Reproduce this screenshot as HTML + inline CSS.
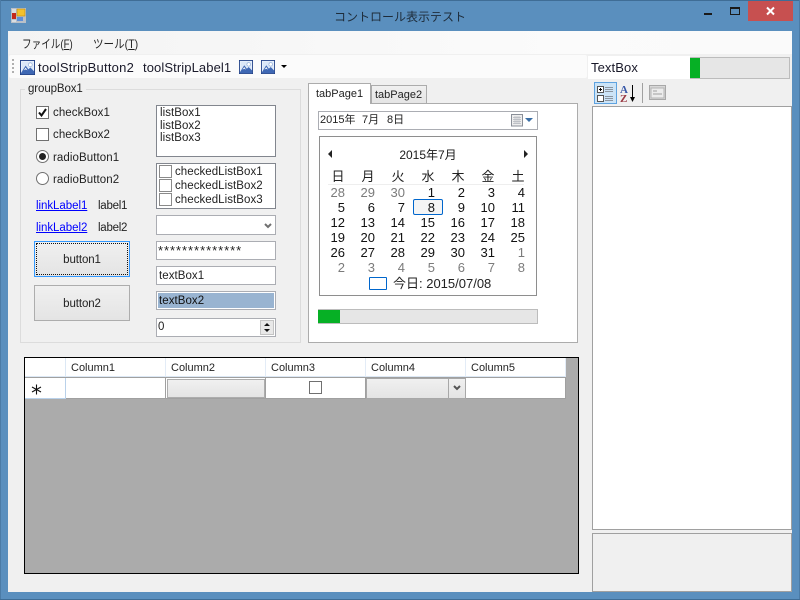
<!DOCTYPE html>
<html lang="ja"><head><meta charset="utf-8"><title>コントロール表示テスト</title>
<style>
html,body{margin:0;padding:0;width:800px;height:600px;overflow:hidden;background:#5a8fbe}
body{position:relative;font-family:"Liberation Sans","Noto Sans CJK JP",sans-serif;font-size:12px;color:#000}
div,span,svg,a{position:absolute;box-sizing:border-box}
u{position:static}
.t{white-space:nowrap;line-height:14px;letter-spacing:.08px;font-size:11.5px;color:#222}
.b{border:1px solid #abadb3;background:#fff}
.c{width:30px;text-align:right;font-size:13px;line-height:15px;color:#111;white-space:nowrap}
.m{color:#7b7b7b}
.d{width:30px;text-align:center;font-size:13px;line-height:15px;white-space:nowrap;color:#222}
.h{background:#fff;border-right:1px solid #e3ecf7;border-bottom:1px solid #dce8f5;font-size:11px;line-height:20px;padding-left:5px;color:#222;white-space:nowrap}
.r{top:378px;height:21px;background:#fff;border-right:1px solid #a0a0a0;border-bottom:1px solid #a0a0a0}
</style></head><body>
<svg width="0" height="0" style="left:0;top:0"><defs><symbol id="p" viewBox="0 0 16 16"><rect x=".5" y=".5" width="15" height="15" fill="#e8f0fa" stroke="#1f3f86"/><rect x="2" y="2" width="12" height="12" fill="#dbe7f7"/><circle cx="11" cy="5" r="2" fill="#fff" stroke="#7f9fd0" stroke-width=".6"/><path d="M1 14 L6 6 L9 10 L11 8 L15 12 V15 H1Z" fill="#3f68b4"/><path d="M4 11 L6 8 L8 11 L6 10Z" fill="#fff"/></symbol></defs></svg>

<!-- Title bar -->
<div style="left:0;top:0;width:800px;height:1px;background:#3f6d96"></div>
<div style="left:0;top:0;width:1px;height:600px;background:#4b7ba6"></div>
<div style="left:799px;top:0;width:1px;height:600px;background:#4b7ba6"></div>
<div style="left:0;top:599px;width:800px;height:1px;background:#3f6d96"></div>
<svg style="left:11px;top:8px" width="15" height="15" viewBox="0 0 15 15"><rect width="15" height="15" fill="#b9c0c8"/><rect x="1" y="1" width="4" height="4" fill="#d9dde2"/><rect x="6" y="1" width="8" height="7" fill="#f3c12c" stroke="#c08a10" stroke-width=".6"/><rect x="1" y="5" width="4" height="6" fill="#c4281c"/><rect x="6" y="9" width="6" height="4" fill="#5d8fd8"/><rect x="1" y="12" width="4" height="2" fill="#d9dde2"/></svg>
<div style="left:300px;top:7px;width:200px;text-align:center;font-size:12px;line-height:20px;color:#1e2c3a;white-space:nowrap">コントロール表示テスト</div>
<div style="left:704px;top:13px;width:8px;height:2px;background:#1a1a1a"></div>
<div style="left:730px;top:7px;width:10px;height:8px;border:1px solid #1a1a1a;border-top-width:2px"></div>
<div style="left:748px;top:1px;width:45px;height:20px;background:#c75050"></div>
<svg style="left:765px;top:6px" width="11" height="10" viewBox="0 0 11 10"><path d="M2 1.500 L9 8.500 M9 1.500 L2 8.500" stroke="#fff" stroke-width="2"/></svg>

<!-- Client -->
<div style="left:8px;top:31px;width:784px;height:561px;background:#f0f0f0"></div>
<div style="left:8px;top:31px;width:784px;height:23px;background:linear-gradient(90deg,#f3f3f3,#fbfbfb 70%,#fafafa)"></div>
<div class="t" style="left:22px;top:37px;font-size:12px;letter-spacing:0;transform:scaleX(.8);transform-origin:left">ファイル(<u>F</u>)</div>
<div class="t" style="left:93px;top:37px;font-size:12px;letter-spacing:0;transform:scaleX(.88);transform-origin:left">ツール(<u>T</u>)</div>

<!-- Toolstrip -->
<div style="left:9px;top:55px;width:578px;height:23px;background:#fbfbfb;border-radius:2px"></div>
<div style="left:12px;top:59px;width:2px;height:16px;background:repeating-linear-gradient(180deg,#b0b0b0 0 2px,transparent 2px 4px)"></div>
<svg style="left:20px;top:60px" width="15" height="15"><use href="#p"/></svg>
<div class="t" style="left:38px;top:61px;font-size:13px;letter-spacing:.22px;color:#1a1a2a">toolStripButton2</div>
<div class="t" style="left:143px;top:61px;font-size:13px;letter-spacing:.1px;color:#1a1a2a">toolStripLabel1</div>
<svg style="left:239px;top:60px" width="14" height="14"><use href="#p"/></svg>
<svg style="left:261px;top:60px" width="14" height="14"><use href="#p"/></svg>
<svg style="left:281px;top:65px" width="7" height="4"><path d="M0 0H6L3 3Z" fill="#000"/></svg>

<!-- TextBox strip -->
<div style="left:588px;top:56px;width:102px;height:23px;background:#fff"></div>
<div class="t" style="left:591px;top:61px;font-size:13px;letter-spacing:.1px;color:#1a1a2a">TextBox</div>
<div style="left:690px;top:57px;width:100px;height:22px;background:#e6e6e6;border:1px solid #bcbcbc;border-left:0"></div>
<div style="left:690px;top:58px;width:10px;height:20px;background:#06b025"></div>

<!-- Property grid toolbar -->
<div style="left:594px;top:82px;width:23px;height:22px;background:#cce4f7;border:1px solid #5fa3e0"></div>
<svg style="left:597px;top:85px" width="18" height="17" viewBox="0 0 18 17"><rect x=".5" y="1.500" width="6" height="6" fill="#fff" stroke="#555"/><path d="M2 4.500H5M3.500 3V6M2 13.500H5M3.500 12V15" stroke="#000"/><rect x=".5" y="10.500" width="6" height="6" fill="#fff" stroke="#555"/><path d="M8 2.500H16M8 4.500H16M8 6.500H16M8 11.500H16M8 13.500H16M8 15.500H16" stroke="#8c95a0"/></svg>
<svg style="left:620px;top:84px" width="17" height="19" viewBox="0 0 17 19"><text x="0" y="9" font-size="11" font-weight="bold" font-family="Liberation Serif" fill="#3858a8">A</text><text x="0" y="18" font-size="11" font-weight="bold" font-family="Liberation Serif" fill="#9a3a44">Z</text><path d="M12.500 1V15" stroke="#000"/><path d="M10 13H15L12.500 18Z" fill="#000"/></svg>
<div style="left:642px;top:83px;width:1px;height:20px;background:#a0a0a0"></div>
<svg style="left:649px;top:85px" width="17" height="15" viewBox="0 0 17 15"><rect x=".5" y=".5" width="16" height="14" fill="#d8d8d8" stroke="#a8a8a8"/><rect x="2" y="3" width="13" height="10" fill="#ececec" stroke="#b4b4b4"/><path d="M4 6H8M4 9H13" stroke="#a0a0a0"/></svg>

<!-- Property grid panes -->
<div style="left:592px;top:106px;width:200px;height:424px;background:#fff;border:1px solid #a0a0a0"></div>
<div style="left:592px;top:533px;width:200px;height:59px;background:#f0f0f0;border:1px solid #a0a0a0"></div>

<!-- GroupBox -->
<div style="left:20px;top:89px;width:281px;height:254px;border:1px solid #dcdcdc"></div>
<div class="t" style="left:25px;top:82px;background:#f0f0f0;padding:0 3px;letter-spacing:-.1px">groupBox1</div>

<div style="left:36px;top:106px;width:13px;height:13px;background:#fff;border:1px solid #707070"></div>
<svg style="left:37px;top:107px" width="11" height="11"><path d="M2 5.500L4.500 8.500L9 2" stroke="#111" stroke-width="2" fill="none"/></svg>
<div class="t" style="left:53px;top:106px">checkBox1</div>
<div style="left:36px;top:128px;width:13px;height:13px;background:#fff;border:1px solid #707070"></div>
<div class="t" style="left:53px;top:128px">checkBox2</div>
<div style="left:36px;top:150px;width:13px;height:13px;background:#fff;border:1px solid #707070;border-radius:50%"></div>
<div style="left:39px;top:153px;width:7px;height:7px;background:#222;border-radius:50%"></div>
<div class="t" style="left:53px;top:151px">radioButton1</div>
<div style="left:36px;top:172px;width:13px;height:13px;background:#fff;border:1px solid #707070;border-radius:50%"></div>
<div class="t" style="left:53px;top:173px">radioButton2</div>
<div class="t" style="left:36px;top:199px;color:#00f;text-decoration:underline;letter-spacing:-.05px">linkLabel1</div>
<div class="t" style="left:98px;top:199px;letter-spacing:-.25px">label1</div>
<div class="t" style="left:36px;top:221px;color:#00f;text-decoration:underline;letter-spacing:-.05px">linkLabel2</div>
<div class="t" style="left:98px;top:221px;letter-spacing:-.25px">label2</div>

<div style="left:34px;top:241px;width:96px;height:36px;background:linear-gradient(#f0f0f0,#e4e4e4);border:1px solid #3399ff"></div>
<div style="left:36px;top:243px;width:92px;height:32px;border:1px dotted #111"></div>
<div class="t" style="left:34px;top:253px;width:96px;text-align:center;letter-spacing:-.1px">button1</div>
<div style="left:34px;top:285px;width:96px;height:36px;background:linear-gradient(#f0f0f0,#e4e4e4);border:1px solid #adadad"></div>
<div class="t" style="left:34px;top:297px;width:96px;text-align:center;letter-spacing:-.1px">button2</div>

<div class="b" style="left:156px;top:105px;width:120px;height:52px;border-color:#82868e"></div>
<div class="t" style="left:160px;top:107px;line-height:12.500px;letter-spacing:.05px">listBox1<br>listBox2<br>listBox3</div>
<div class="b" style="left:156px;top:163px;width:120px;height:46px;border-color:#82868e"></div>
<div class="b" style="left:159px;top:165px;width:13px;height:13px;border-color:#8a8a8a"></div>
<div class="b" style="left:159px;top:179px;width:13px;height:13px;border-color:#8a8a8a"></div>
<div class="b" style="left:159px;top:193px;width:13px;height:13px;border-color:#8a8a8a"></div>
<div class="t" style="left:175px;top:165px;letter-spacing:.05px">checkedListBox1<br>checkedListBox2<br>checkedListBox3</div>

<div class="b" style="left:156px;top:215px;width:120px;height:20px"></div>
<svg style="left:264px;top:223px" width="9" height="6"><path d="M1 1L4 4L7 1" stroke="#707070" stroke-width="2" fill="none"/></svg>
<div class="b" style="left:156px;top:241px;width:120px;height:19px"></div>
<div class="t" style="left:158px;top:244px;font-size:13px;letter-spacing:.95px">**************</div>
<div class="b" style="left:156px;top:266px;width:120px;height:19px"></div>
<div class="t" style="left:159px;top:269px;letter-spacing:.05px">textBox1</div>
<div class="b" style="left:156px;top:291px;width:120px;height:19px"></div>
<div style="left:158px;top:293px;width:116px;height:15px;background:#99b4d1"></div>
<div class="t" style="left:159px;top:294px;color:#111;letter-spacing:.05px">textBox2</div>
<div class="b" style="left:156px;top:318px;width:120px;height:19px"></div>
<div class="t" style="left:158px;top:320px">0</div>
<div style="left:260px;top:320px;width:14px;height:15px;background:#e8e8e8;border:1px solid #c4c4c4"></div>
<svg style="left:262px;top:322px" width="10" height="12"><path d="M2 4H8L5 1ZM2 7H8L5 10Z" fill="#111"/></svg>

<!-- TabControl -->
<div style="left:308px;top:103px;width:270px;height:240px;background:#fff;border:1px solid #acacac"></div>
<div style="left:371px;top:85px;width:56px;height:19px;background:linear-gradient(#f0f0f0,#e5e5e5);border:1px solid #acacac"></div>
<div class="t" style="left:375px;top:88px;font-size:11px;letter-spacing:0">tabPage2</div>
<div style="left:308px;top:83px;width:63px;height:21px;background:#fff;border:1px solid #acacac;border-bottom:0"></div>
<div class="t" style="left:316px;top:87px;font-size:11px;letter-spacing:0">tabPage1</div>

<!-- DateTimePicker -->
<div class="b" style="left:318px;top:111px;width:220px;height:19px"></div>
<div class="t" style="left:320px;top:113px;font-size:11px;letter-spacing:0">2015年</div>
<div class="t" style="left:362px;top:113px;font-size:11px;letter-spacing:0">7月</div>
<div class="t" style="left:387px;top:113px;font-size:11px;letter-spacing:0">8日</div>
<svg style="left:511px;top:114px" width="13" height="13" viewBox="0 0 13 13"><rect x=".5" y=".5" width="11" height="11.500" fill="#eee" stroke="#8a8f98"/><path d="M2 3.500H10M2 5.500H10M2 7.500H10M2 9.500H10M4 2V10M6 2V10M8 2V10" stroke="#b4b8be" stroke-width=".7"/></svg>
<svg style="left:525px;top:118px" width="9" height="5"><path d="M0 0H8L4 4Z" fill="#3a6ea5"/></svg>

<!-- MonthCalendar -->
<div style="left:319px;top:136px;width:218px;height:160px;background:#fff;border:1px solid #8e8e8e"></div>
<svg style="left:328px;top:150px" width="6" height="8"><path d="M4 0V8L0 4Z" fill="#222"/></svg>
<svg style="left:524px;top:150px" width="6" height="8"><path d="M0 0V8L4 4Z" fill="#222"/></svg>
<div class="t" style="left:319px;top:148px;width:218px;text-align:center;font-size:12px;letter-spacing:0;color:#1a1a1a">2015年7月</div>
<div class="d" style="left:323px;top:169px">日</div><div class="d" style="left:353px;top:169px">月</div><div class="d" style="left:383px;top:169px">火</div><div class="d" style="left:413px;top:169px">水</div><div class="d" style="left:443px;top:169px">木</div><div class="d" style="left:473px;top:169px">金</div><div class="d" style="left:503px;top:169px">土</div>
<div style="left:328px;top:184px;width:196px;height:1px;background:#eee"></div>

<div class="c m" style="left:315px;top:185px">28</div><div class="c m" style="left:345px;top:185px">29</div><div class="c m" style="left:375px;top:185px">30</div><div class="c" style="left:405px;top:185px">1</div><div class="c" style="left:435px;top:185px">2</div><div class="c" style="left:465px;top:185px">3</div><div class="c" style="left:495px;top:185px">4</div>
<div style="left:413px;top:199px;width:30px;height:16px;background:#f4f4f4;border:1px solid #0066cc;border-radius:2px"></div>
<div class="c" style="left:315px;top:200px">5</div><div class="c" style="left:345px;top:200px">6</div><div class="c" style="left:375px;top:200px">7</div><div class="c" style="left:405px;top:200px">8</div><div class="c" style="left:435px;top:200px">9</div><div class="c" style="left:465px;top:200px">10</div><div class="c" style="left:495px;top:200px">11</div>
<div class="c" style="left:315px;top:215px">12</div><div class="c" style="left:345px;top:215px">13</div><div class="c" style="left:375px;top:215px">14</div><div class="c" style="left:405px;top:215px">15</div><div class="c" style="left:435px;top:215px">16</div><div class="c" style="left:465px;top:215px">17</div><div class="c" style="left:495px;top:215px">18</div>
<div class="c" style="left:315px;top:230px">19</div><div class="c" style="left:345px;top:230px">20</div><div class="c" style="left:375px;top:230px">21</div><div class="c" style="left:405px;top:230px">22</div><div class="c" style="left:435px;top:230px">23</div><div class="c" style="left:465px;top:230px">24</div><div class="c" style="left:495px;top:230px">25</div>
<div class="c" style="left:315px;top:245px">26</div><div class="c" style="left:345px;top:245px">27</div><div class="c" style="left:375px;top:245px">28</div><div class="c" style="left:405px;top:245px">29</div><div class="c" style="left:435px;top:245px">30</div><div class="c" style="left:465px;top:245px">31</div><div class="c m" style="left:495px;top:245px">1</div>
<div class="c m" style="left:315px;top:260px">2</div><div class="c m" style="left:345px;top:260px">3</div><div class="c m" style="left:375px;top:260px">4</div><div class="c m" style="left:405px;top:260px">5</div><div class="c m" style="left:435px;top:260px">6</div><div class="c m" style="left:465px;top:260px">7</div><div class="c m" style="left:495px;top:260px">8</div>
<div style="left:369px;top:277px;width:18px;height:13px;background:#fff;border:1px solid #0066cc;border-radius:1px"></div>
<div class="t" style="left:393px;top:277px;font-size:13px;letter-spacing:0">今日: 2015/07/08</div>

<!-- ProgressBar -->
<div style="left:318px;top:309px;width:220px;height:15px;background:#e6e6e6;border:1px solid #bcbcbc"></div>
<div style="left:318px;top:310px;width:22px;height:13px;background:#06b025"></div>

<!-- DataGridView -->
<div style="left:24px;top:357px;width:555px;height:217px;background:#ababab;border:1px solid #000"></div>
<div class="h" style="left:25px;top:358px;width:41px;height:19px;border-right:1px solid #dce8f5;padding:0"></div>
<div class="h" style="left:66px;width:100px;top:358px;height:19px">Column1</div>
<div class="h" style="left:166px;width:100px;top:358px;height:19px">Column2</div>
<div class="h" style="left:266px;width:100px;top:358px;height:19px">Column3</div>
<div class="h" style="left:366px;width:100px;top:358px;height:19px">Column4</div>
<div class="h" style="left:466px;width:100px;top:358px;height:19px">Column5</div>
<div style="left:25px;top:377px;width:541px;height:1px;background:#a0a0a0"></div>
<div style="left:25px;top:378px;width:41px;height:21px;background:#fff;border-right:1px solid #b9d1ea;border-bottom:1px solid #b9d1ea"></div>
<svg style="left:31px;top:384px" width="11" height="11" viewBox="0 0 11 11"><path d="M5.500 .5V10.500M1 3L10 8M10 3L1 8" stroke="#111" stroke-width="1.100"/></svg>
<div class="r" style="left:66px;width:100px"></div>
<div class="r" style="left:166px;width:100px"></div>
<div style="left:167px;top:379px;width:98px;height:19px;background:linear-gradient(#f0f0f0,#e4e4e4);border:1px solid #adadad"></div>
<div class="r" style="left:266px;width:100px"></div>
<div style="left:309px;top:381px;width:13px;height:13px;background:#fff;border:1px solid #707070"></div>
<div class="r" style="left:366px;width:100px"></div>
<div style="left:366px;top:378px;width:100px;height:21px;background:linear-gradient(#f0f0f0,#e4e4e4);border:1px solid #a8a8a8"></div>
<div style="left:448px;top:379px;width:1px;height:19px;background:#a8a8a8"></div>
<svg style="left:453px;top:385px" width="9" height="6"><path d="M1 1L4 4L7 1" stroke="#555" stroke-width="2" fill="none"/></svg>
<div class="r" style="left:466px;width:100px"></div>
</body></html>
